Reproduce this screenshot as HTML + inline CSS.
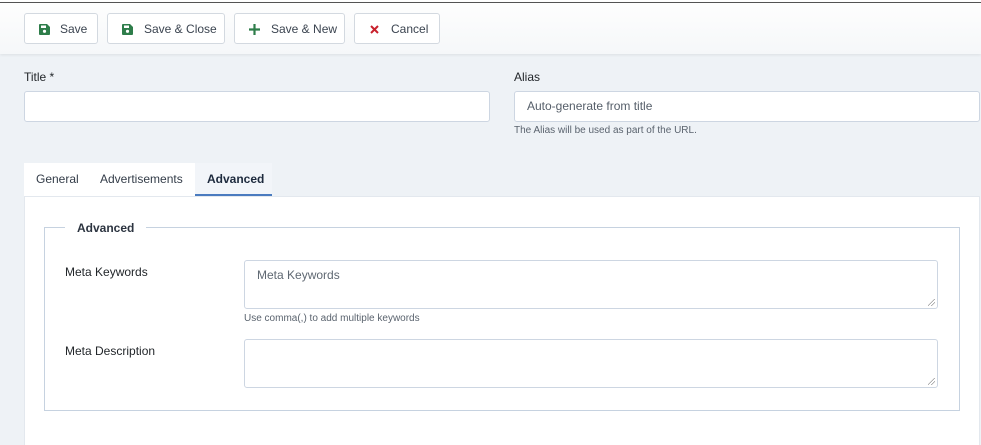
<!DOCTYPE html>
<html><head><style>
*{box-sizing:border-box;margin:0;padding:0}
html,body{width:981px;height:445px;overflow:hidden}
body{background:#eef2f6;font-family:"Liberation Sans",sans-serif;font-size:12px;color:#22262a;position:relative}
.top{position:absolute;left:0;top:0;width:981px;height:3px;background:#fff;border-bottom:1px solid #555}
.tb{position:absolute;left:0;top:3px;width:981px;height:51px;background:linear-gradient(#fefefe,#f5f7f9);box-shadow:0 1px 3px rgba(0,0,0,.08)}
.btn{position:absolute;top:13px;height:31px;background:#fff;border:1px solid #d3d9e0;border-radius:3px;font-size:12px;color:#3b4450;line-height:30px}
.btn span{position:absolute;top:0}
.lbl{position:absolute;font-size:12px;color:#22262a}
.inp{position:absolute;background:#fff;border:1px solid #cdd6e2;border-radius:3px}
.help{position:absolute;font-size:10px;color:#5a636e}
.panel{position:absolute;left:24px;top:196px;width:956px;height:249px;background:#fff;border:1px solid #e3e8ee;border-bottom:none}
.tab{position:absolute;top:163px;height:33px;line-height:33px;background:#fff;color:#333c48;font-size:12px}
.fs{position:absolute;left:44px;top:227px;width:916px;height:184px;border:1px solid #c6d2e0}
.grip{position:absolute;right:2px;bottom:2px;width:7px;height:7px;background:linear-gradient(135deg,transparent 45%,#999 45%,#999 52%,transparent 52%,transparent 70%,#999 70%,#999 77%,transparent 77%)}
</style></head><body>
<div class="top"></div>
<div class="tb"></div>
<div class="btn" style="left:24px;width:74px"><svg style="position:absolute;left:14px;top:10px" width="11" height="11" viewBox="0 0 11 11"><path d="M0 1a1 1 0 0 1 1-1h7l3 3v7a1 1 0 0 1-1 1H1a1 1 0 0 1-1-1z" fill="#2e7d4a"/><rect x="2" y="1.5" width="5" height="2.5" fill="#fff"/><circle cx="5.5" cy="7.3" r="1.6" fill="#fff"/></svg><span style="left:35px">Save</span></div>
<div class="btn" style="left:107px;width:118px"><svg style="position:absolute;left:14px;top:10px" width="11" height="11" viewBox="0 0 11 11"><path d="M0 1a1 1 0 0 1 1-1h7l3 3v7a1 1 0 0 1-1 1H1a1 1 0 0 1-1-1z" fill="#2e7d4a"/><rect x="2" y="1.5" width="5" height="2.5" fill="#fff"/><circle cx="5.5" cy="7.3" r="1.6" fill="#fff"/></svg><span style="left:36px">Save &amp; Close</span></div>
<div class="btn" style="left:234px;width:111px"><svg style="position:absolute;left:14px;top:10px" width="11" height="11" viewBox="0 0 11 11"><path d="M5.5 0v11M0 5.5h11" stroke="#2e7d4a" stroke-width="2.2"/></svg><span style="left:36px">Save &amp; New</span></div>
<div class="btn" style="left:354px;width:86px"><svg style="position:absolute;left:15px;top:11px" width="9" height="9" viewBox="0 0 9 9"><path d="M1 1l7 7M8 1l-7 7" stroke="#c8202c" stroke-width="2"/></svg><span style="left:36px">Cancel</span></div>

<div class="lbl" style="left:24px;top:70px">Title *</div>
<div class="inp" style="left:24px;top:91px;width:466px;height:31px"></div>
<div class="lbl" style="left:514px;top:70px">Alias</div>
<div class="inp" style="left:514px;top:91px;width:466px;height:31px;color:#555e69;padding-left:12px;line-height:29px">Auto-generate from title</div>
<div class="help" style="left:514px;top:125px">The Alias will be used as part of the URL.</div>

<div class="panel"></div>
<div class="tab" style="left:24px;width:64px;padding-left:12px">General</div>
<div class="tab" style="left:88px;width:107px;padding-left:12px">Advertisements</div>
<div class="tab" style="left:195px;width:77px;padding-left:12px;background:#f2f5f9;font-weight:bold;color:#1d2a3d;border-bottom:2px solid #4a7bbf">Advanced</div>

<div class="fs"></div>
<div style="position:absolute;left:65px;top:220px;background:#fff;padding:0 12px;font-weight:bold;color:#2c3440;line-height:16px">Advanced</div>
<div class="lbl" style="left:65px;top:265px">Meta Keywords</div>
<div class="inp" style="left:244px;top:260px;width:694px;height:49px;color:#5f6872;padding:7px 0 0 12px">Meta Keywords<div class="grip"></div></div>
<div class="help" style="left:244px;top:313px">Use comma(,) to add multiple keywords</div>
<div class="lbl" style="left:65px;top:344px">Meta Description</div>
<div class="inp" style="left:244px;top:339px;width:694px;height:49px"><div class="grip"></div></div>
</body></html>
